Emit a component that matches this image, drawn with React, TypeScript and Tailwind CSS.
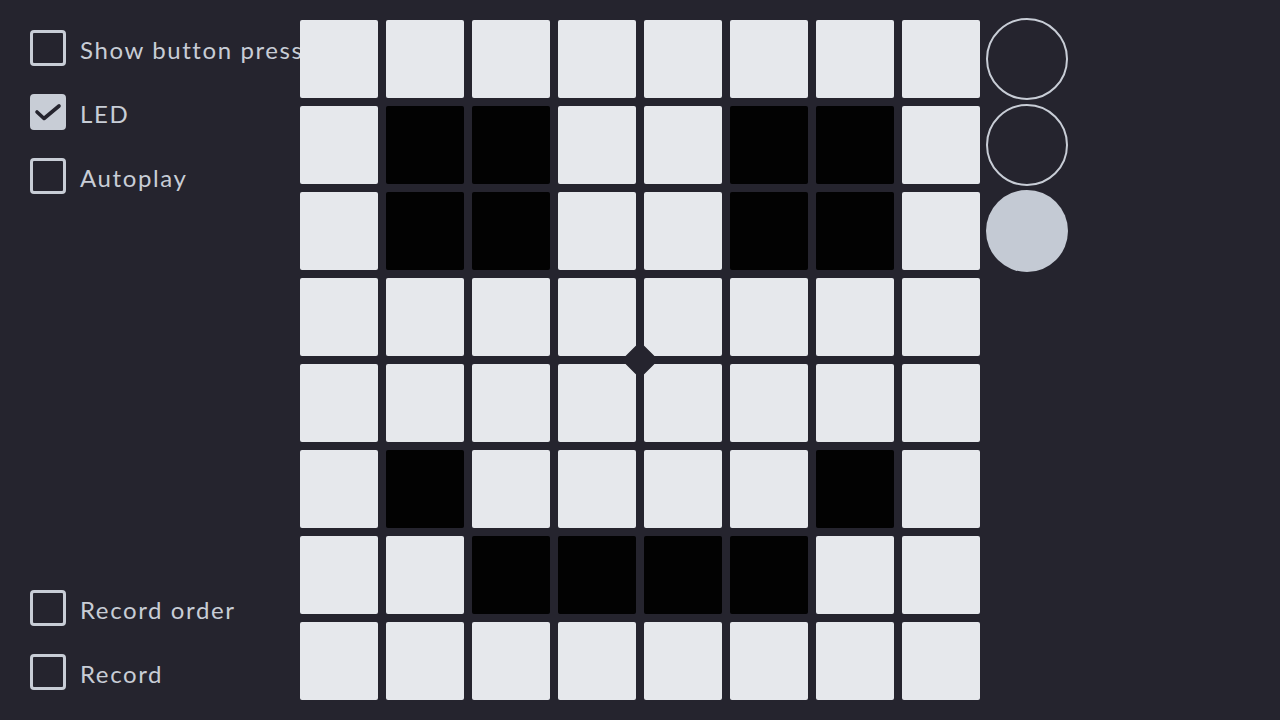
import React from 'react';

const pattern: number[][] = [
  [0, 0, 0, 0, 0, 0, 0, 0],
  [0, 1, 1, 0, 0, 1, 1, 0],
  [0, 1, 1, 0, 0, 1, 1, 0],
  [0, 0, 0, 0, 0, 0, 0, 0],
  [0, 0, 0, 0, 0, 0, 0, 0],
  [0, 1, 0, 0, 0, 0, 1, 0],
  [0, 0, 1, 1, 1, 1, 0, 0],
  [0, 0, 0, 0, 0, 0, 0, 0],
];

const Check: React.FC<{ label: string; checked?: boolean }> = ({ label, checked = false }) => (
  <label className="flex items-center gap-[14px] h-[36px] whitespace-nowrap">
    <span
      className={`w-[36px] h-[36px] shrink-0 rounded-[4px] border-[3px] border-[#c8cdd6] flex items-center justify-center ${
        checked ? 'bg-[#c8cdd6]' : 'bg-transparent'
      }`}
    >
      {checked && (
        <svg width="30" height="30" viewBox="0 0 30 30" fill="none">
          <path d="M4 15l7 6.5L26 9" stroke="#25242e" strokeWidth="3.6" strokeLinecap="round" strokeLinejoin="round" />
        </svg>
      )}
    </span>
    <span className="text-[24px] text-[#c8cdd6] leading-none pt-[4px] tracking-[1.6px]">{label}</span>
  </label>
);

export default function App() {
  return (
    <div
      className="w-[1280px] h-[720px] bg-[#25242e] flex overflow-hidden"
      style={{ fontFamily: 'Lato, "Noto Sans", sans-serif' }}
    >
      {/* Options */}
      <div className="w-[300px] shrink-0 overflow-hidden flex flex-col justify-between pl-[30px] py-[30px]">
        <div className="flex flex-col gap-[28px]">
          <Check label="Show button press" />
          <Check label="LED" checked />
          <Check label="Autoplay" />
        </div>
        <div className="flex flex-col gap-[28px]">
          <Check label="Record order" />
          <Check label="Record" />
        </div>
      </div>

      {/* Matrix */}
      <div className="pt-[20px]">
        <div className="relative grid grid-cols-[repeat(8,78px)] gap-[8px]">
          {pattern.flat().map((v, i) => (
            <div
              key={i}
              className={`w-[78px] h-[78px] rounded-[2px] ${v ? 'bg-[#020202]' : 'bg-[#e6e8ec]'}`}
            />
          ))}
          <div className="absolute left-[327px] top-[327px] w-[26px] h-[26px] rotate-45 rounded-[2px] bg-[#25242e]" />
        </div>
      </div>

      {/* Buttons */}
      <div className="pl-[6px] pt-[18px] flex flex-col gap-[4px]">
        <div className="w-[82px] h-[82px] rounded-full border-2 border-[#c8cdd6]" />
        <div className="w-[82px] h-[82px] rounded-full border-2 border-[#c8cdd6]" />
        <div className="w-[82px] h-[82px] rounded-full bg-[#c4cad4]" />
      </div>
    </div>
  );
}
